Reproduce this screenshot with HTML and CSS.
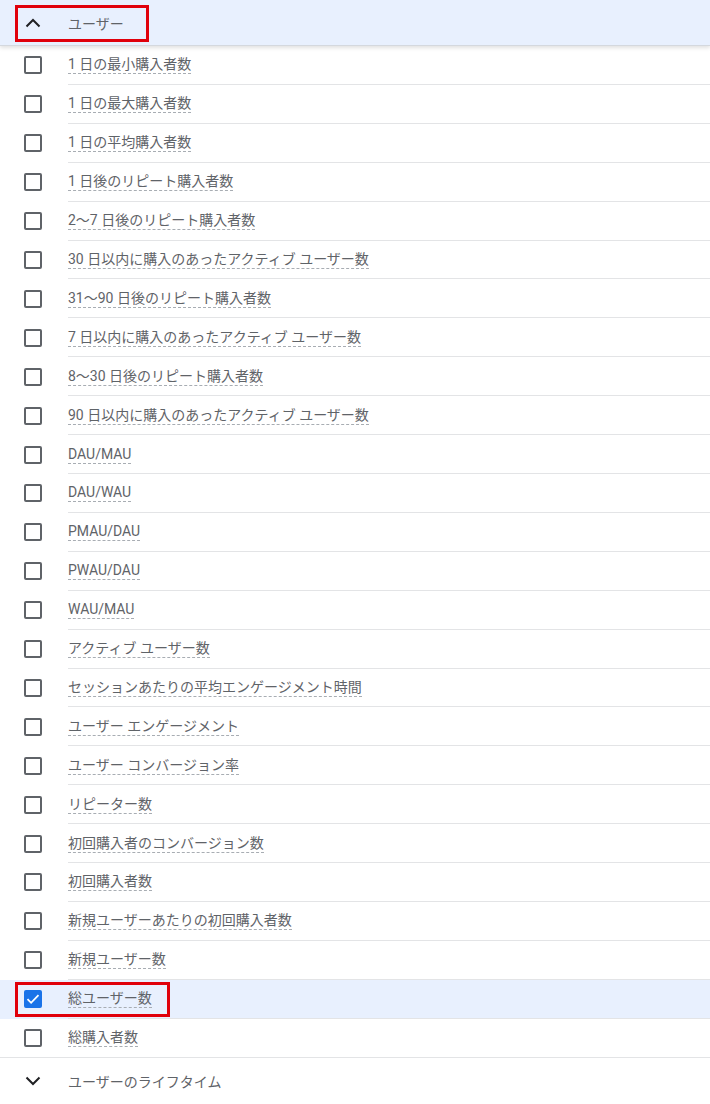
FILE: index.html
```html
<!DOCTYPE html>
<html lang="ja">
<head>
    <meta charset="UTF-8">
    <title>ユーザー</title>
    <link rel="stylesheet" href="styles.css">
</head>
<body>
    <div class="panel">
        <div class="group-head open">
            <svg class="chev" viewBox="0 0 16 10" width="16" height="10"><path d="M1.5 8.5 8 2l6.5 6.5"/></svg>
            <span>ユーザー</span>
        </div>

        <ul class="metric-list">
            <li class="metric"><span class="box"></span><span class="label">1 日の最小購入者数</span></li>
            <li class="metric"><span class="box"></span><span class="label">1 日の最大購入者数</span></li>
            <li class="metric"><span class="box"></span><span class="label">1 日の平均購入者数</span></li>
            <li class="metric"><span class="box"></span><span class="label">1 日後のリピート購入者数</span></li>
            <li class="metric"><span class="box"></span><span class="label">2〜7 日後のリピート購入者数</span></li>
            <li class="metric"><span class="box"></span><span class="label">30 日以内に購入のあったアクティブ ユーザー数</span></li>
            <li class="metric"><span class="box"></span><span class="label">31〜90 日後のリピート購入者数</span></li>
            <li class="metric"><span class="box"></span><span class="label">7 日以内に購入のあったアクティブ ユーザー数</span></li>
            <li class="metric"><span class="box"></span><span class="label">8〜30 日後のリピート購入者数</span></li>
            <li class="metric"><span class="box"></span><span class="label">90 日以内に購入のあったアクティブ ユーザー数</span></li>
            <li class="metric"><span class="box"></span><span class="label">DAU/MAU</span></li>
            <li class="metric"><span class="box"></span><span class="label">DAU/WAU</span></li>
            <li class="metric"><span class="box"></span><span class="label">PMAU/DAU</span></li>
            <li class="metric"><span class="box"></span><span class="label">PWAU/DAU</span></li>
            <li class="metric"><span class="box"></span><span class="label">WAU/MAU</span></li>
            <li class="metric"><span class="box"></span><span class="label">アクティブ ユーザー数</span></li>
            <li class="metric"><span class="box"></span><span class="label">セッションあたりの平均エンゲージメント時間</span></li>
            <li class="metric"><span class="box"></span><span class="label">ユーザー エンゲージメント</span></li>
            <li class="metric"><span class="box"></span><span class="label">ユーザー コンバージョン率</span></li>
            <li class="metric"><span class="box"></span><span class="label">リピーター数</span></li>
            <li class="metric"><span class="box"></span><span class="label">初回購入者のコンバージョン数</span></li>
            <li class="metric"><span class="box"></span><span class="label">初回購入者数</span></li>
            <li class="metric"><span class="box"></span><span class="label">新規ユーザーあたりの初回購入者数</span></li>
            <li class="metric"><span class="box"></span><span class="label">新規ユーザー数</span></li>
            <li class="metric checked">
                <span class="box"><svg viewBox="0 0 18 18" width="18" height="18"><path d="M3.5 9.2l3.6 3.6 7.4-7.6" fill="none" stroke="#fff" stroke-width="1.8"/></svg></span>
                <span class="label">総ユーザー数</span>
            </li>
            <li class="metric last"><span class="box"></span><span class="label">総購入者数</span></li>
        </ul>

        <div class="group-head">
            <svg class="chev" viewBox="0 0 16 10" width="16" height="10"><path d="M1.5 1.5 8 8l6.5-6.5"/></svg>
            <span>ユーザーのライフタイム</span>
        </div>

        <!-- annotation frames -->
        <div class="mark mark-head"></div>
        <div class="mark mark-total"></div>
    </div>
</body>
</html>
```

FILE: styles.css
```css
* {
    box-sizing: border-box;
    margin: 0;
    padding: 0;
}

body {
    font-family: Roboto, "Noto Sans CJK JP", sans-serif;
    font-size: 14px;
    color: #5f6368;
    background: #fff;
}

.panel {
    position: relative;
    width: 710px;
}

.group-head {
    display: flex;
    align-items: center;
    height: 46px;
    padding-left: 25px;
    gap: 27px;
}

.group-head.open {
    background: #e8f0fe;
    border-bottom: 1px solid #d4d8de;
    box-shadow: 0 2px 4px rgba(0, 0, 0, 0.12);
    position: relative;
    z-index: 1;
}

.chev {
    fill: none;
    stroke: #202124;
    stroke-width: 2;
    flex: none;
}

.metric-list {
    list-style: none;
}

.metric {
    display: flex;
    align-items: center;
    height: 38.92px;
    position: relative;
}

.metric::after {
    content: "";
    position: absolute;
    left: 68px;
    right: 0;
    bottom: 0;
    border-bottom: 1px solid #e3e4e6;
}

.metric.last::after {
    left: 0;
}

.metric.checked {
    background: #e8f0fe;
}

.box {
    width: 18px;
    height: 18px;
    margin: 0 26px 0 24px;
    border: 2px solid #5f6368;
    border-radius: 2px;
    flex: none;
    display: flex;
}

.checked .box {
    background: #1a73e8;
    border-color: #1a73e8;
    align-items: center;
    justify-content: center;
}

.checked .box svg {
    flex: none;
}

.label {
    border-bottom: 1px dashed #a8adb3;
    line-height: 17px;
}

.mark {
    position: absolute;
    border: 3px solid #e0000b;
    z-index: 2;
}

.mark-head {
    left: 15px;
    top: 5px;
    width: 134px;
    height: 37px;
}

.mark-total {
    left: 15px;
    top: 982px;
    width: 155px;
    height: 35px;
}
```
